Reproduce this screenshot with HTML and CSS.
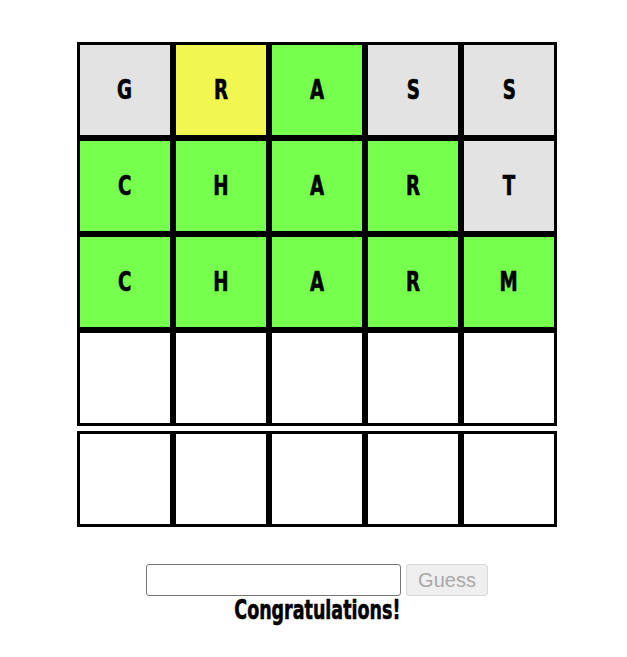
FILE: index.html
```html
<!DOCTYPE html>
<html>
<head>
<meta charset="utf-8">
<link rel="stylesheet" href="styles.css">
</head>
<body>
<div class="board">
  <div class="row">
    <div class="cell gray"><span class="letter">G</span></div>
    <div class="cell yellow"><span class="letter">R</span></div>
    <div class="cell green"><span class="letter">A</span></div>
    <div class="cell gray"><span class="letter">S</span></div>
    <div class="cell gray"><span class="letter">S</span></div>
  </div>
  <div class="row">
    <div class="cell green"><span class="letter">C</span></div>
    <div class="cell green"><span class="letter">H</span></div>
    <div class="cell green"><span class="letter">A</span></div>
    <div class="cell green"><span class="letter">R</span></div>
    <div class="cell gray"><span class="letter">T</span></div>
  </div>
  <div class="row">
    <div class="cell green"><span class="letter">C</span></div>
    <div class="cell green"><span class="letter">H</span></div>
    <div class="cell green"><span class="letter">A</span></div>
    <div class="cell green"><span class="letter">R</span></div>
    <div class="cell green"><span class="letter">M</span></div>
  </div>
  <div class="row">
    <div class="cell"></div>
    <div class="cell"></div>
    <div class="cell"></div>
    <div class="cell"></div>
    <div class="cell"></div>
  </div>
  <div class="row current">
    <div class="cell"></div>
    <div class="cell"></div>
    <div class="cell"></div>
    <div class="cell"></div>
    <div class="cell"></div>
  </div>
</div>
<form class="controls">
  <input class="guess-input" type="text">
  <button class="guess-btn" type="button" disabled>Guess</button>
</form>
<div class="message"><span class="message-text">Congratulations!</span></div>
</body>
</html>
```
FILE: styles.css
```css
html, body {
  margin: 0;
  background: #ffffff;
}
body {
  padding: 42px 0 0 7px;
  font-family: "Liberation Sans", Arial, sans-serif;
}
.board {
  width: 480px;
  margin: 0 auto;
  display: flex;
  flex-direction: column;
}
.row {
  display: flex;
}
.row.current {
  margin-top: 5px;
}
.cell {
  width: 96px;
  height: 96px;
  box-sizing: border-box;
  border: 3px solid #000;
  background: #ffffff;
  display: flex;
  align-items: center;
  justify-content: center;
  color: #000;
}
.letter {
  display: inline-block;
  font-family: Impact, "Liberation Sans Narrow", "DejaVu Sans Condensed", sans-serif;
  font-weight: bold;
  font-size: 26px;
  -webkit-text-stroke: 0.6px #000;
  transform: scaleX(0.78);
}
.gray { background: #e3e3e3; }
.yellow { background: #f2f651; }
.green { background: #77ff4e; }
.controls {
  margin: 37px 0 0 0;
  display: flex;
  justify-content: center;
  gap: 5px;
}
.guess-input {
  width: 255px;
  height: 32px;
  box-sizing: border-box;
  border: 1px solid #767676;
  border-radius: 3px;
  padding: 0 4px;
  margin: 0;
  font-size: 16px;
}
.guess-btn {
  width: 82px;
  height: 32px;
  box-sizing: border-box;
  border: 1px solid #d9d9d9;
  border-radius: 3px;
  background: #efefef;
  color: #a8a8a8;
  font-family: "Liberation Sans", Arial, sans-serif;
  font-size: 20px;
  margin: 0;
  padding: 0;
}
.message {
  text-align: center;
  line-height: 28px;
  margin-top: 0;
}
.message-text {
  display: inline-block;
  font-family: Impact, "Liberation Sans Narrow", "DejaVu Sans Condensed", sans-serif;
  font-weight: bold;
  font-size: 27px;
  -webkit-text-stroke: 0.6px #000;
  transform: scaleX(0.72);
}
```
